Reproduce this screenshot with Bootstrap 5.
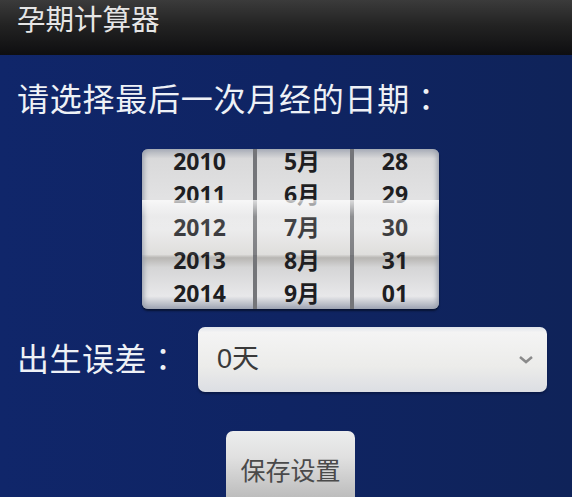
<!DOCTYPE html>
<html lang="zh">
<head>
<meta charset="utf-8">
<title>孕期计算器</title>
<link href="https://cdn.jsdelivr.net/npm/bootstrap@5.3.0/dist/css/bootstrap.min.css" rel="stylesheet">
<style>
html,body{height:497px;overflow:hidden}
body{font-family:"Liberation Sans","Noto Sans CJK SC",sans-serif;background:linear-gradient(90deg,#10266a 0,#0f2463 50%,#0f2359 100%);color:#eef1f6}
.title-strip{height:55px;background:linear-gradient(180deg,#3b3b3b 0,#232323 45%,#0e0e10 100%);padding:2px 0 0 17px;font-size:28.5px;line-height:36px;color:#e6e6e6}
.prompt-line{height:40px;font-size:32px;line-height:40px;margin:25px 0 0 17px;letter-spacing:.75px;white-space:nowrap}
.tc-colon{font-family:"Noto Sans CJK TC",sans-serif;line-height:1}
.wheel{width:297px;height:160px;margin:29px 0 0 142px;border-radius:6px;position:relative;box-shadow:0 2px 2px #081433,inset 5px 0 5px -3px #9aa0ad,inset -5px 0 5px -3px #9aa0ad;background:linear-gradient(180deg,#a9aeb7 0,#d9d9da 6%,#e9e9ea 50%,#dcdbd9 66%,#b8b6b3 68%,#d5d5d6 74%,#e8e8ea 92%,#9fa5b3 100%)}
.wheel::after{content:"";position:absolute;left:0;right:0;top:51px;height:55px;background:linear-gradient(180deg,rgba(255,255,255,.75) 0,rgba(255,255,255,.18) 30%,rgba(255,255,255,.08) 100%)}
.wheel-col{display:flex;flex-direction:column;gap:8px;font-family:"Noto Sans","Noto Sans CJK SC",sans-serif;font-weight:700;font-size:23px;line-height:25px;color:#1e1e22;text-align:center}
.wheel-col + .wheel-col{border-left:4px solid #747579}
.wheel-y{width:111px;padding-left:4px}
.wheel-m{width:97px;padding-right:3px}
.wheel-d{width:89px;padding-right:3px}
.field-row{margin:18px 0 0 17px}
.field-label{height:40px;font-size:32px;line-height:40px;width:181px;letter-spacing:.5px;white-space:nowrap}
.day-select{width:349px;height:65px;border-radius:7px;font-size:27px;color:#3a3a3a;padding:0 0 0 19px;background:#ececec linear-gradient(180deg,#dfe3ea 0,#f4f4f4 8%,#ececea 60%,#dcdee3 100%);box-shadow:0 2px 2px #0a1a48}
.day-chevron{position:absolute;right:13px;top:28px}
.save-btn{width:129px;height:66px;margin:39px 0 0 226px;border:0;border-radius:7px 7px 0 0;font-size:25px;line-height:30px;color:#4a4a4a;padding:14px 0 0;background:linear-gradient(180deg,#eceded 0,#e0e0e0 40%,#bdbdbd 100%);display:block}
</style>
</head>
<body>
<div class="title-strip">孕期计算器</div>
<div class="prompt-line">请选择最后一次月经的日期<span class="tc-colon" lang="zh-TW">：</span></div>
<div class="wheel d-flex">
  <div class="wheel-col wheel-y"><div>2010</div><div>2011</div><div>2012</div><div>2013</div><div>2014</div></div>
  <div class="wheel-col wheel-m"><div>5月</div><div>6月</div><div>7月</div><div>8月</div><div>9月</div></div>
  <div class="wheel-col wheel-d"><div>28</div><div>29</div><div>30</div><div>31</div><div>01</div></div>
</div>
<div class="field-row d-flex align-items-center">
  <div class="field-label">出生误差<span class="tc-colon" lang="zh-TW">：</span></div>
  <div class="day-select d-flex align-items-center position-relative">0天
    <svg class="day-chevron" width="16" height="10" viewBox="0 0 16 10"><path d="M2 2l6 5 6-5" fill="none" stroke="#8a8a8a" stroke-width="2.5"/></svg>
  </div>
</div>
<button type="button" class="btn save-btn">保存设置</button>
<script src="https://cdn.jsdelivr.net/npm/bootstrap@5.3.0/dist/js/bootstrap.bundle.min.js"></script>
</body>
</html>
